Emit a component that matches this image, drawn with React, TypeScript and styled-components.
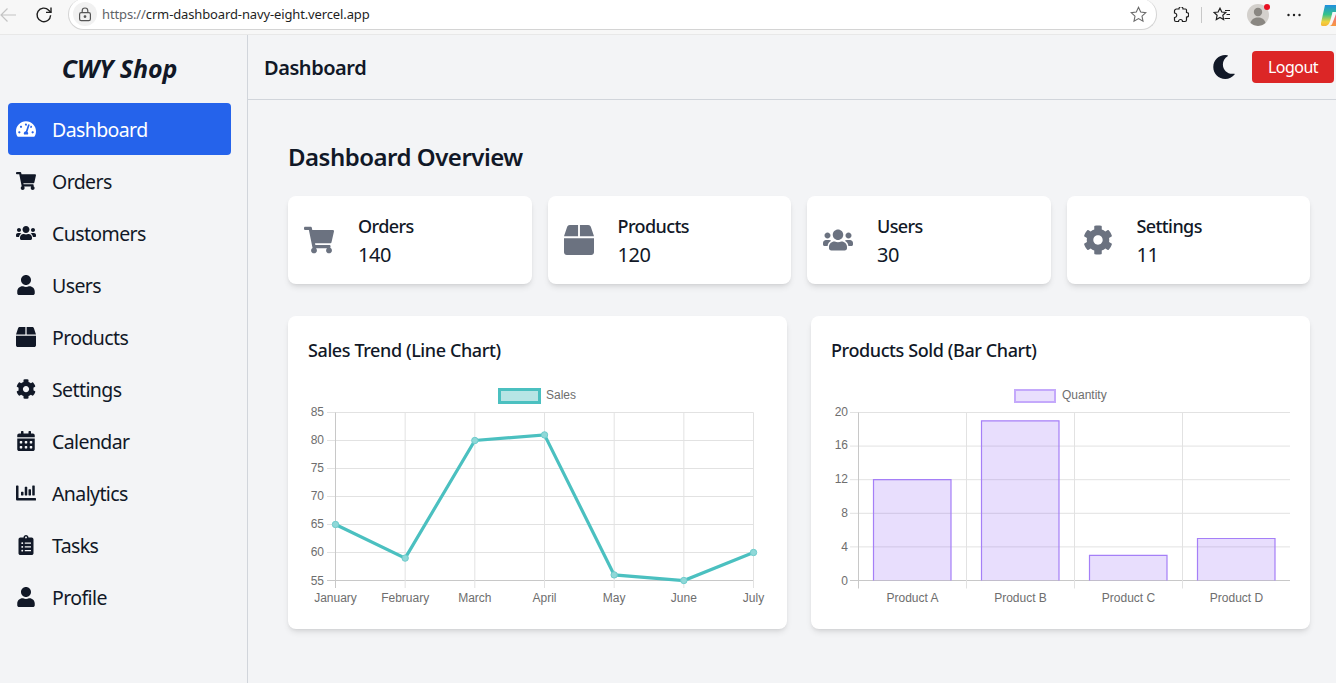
import styled, { createGlobalStyle } from "styled-components";
import {
  FaBox,
  FaCalendarAlt,
  FaChartBar,
  FaClipboardList,
  FaCog,
  FaMoon,
  FaShoppingCart,
  FaTachometerAlt,
  FaUser,
  FaUsers,
} from "react-icons/fa";

const GlobalStyle = createGlobalStyle`
  html, body {
    margin: 0;
    padding: 0;
    height: 100%;
    overflow: hidden;
    background: #f3f4f6;
  }
  * {
    box-sizing: border-box;
  }
`;

const Page = styled.div`
  width: 1336px;
  height: 683px;
  display: flex;
  flex-direction: column;
  overflow: hidden;
  font-family: "Noto Sans", "Open Sans", sans-serif;
  color: #111827;
  background: #f3f4f6;
`;

const BrowserBar = styled.div`
  height: 35px;
  flex: none;
  display: flex;
  align-items: flex-start;
  background: #f7f7f7;
  border-bottom: 1px solid #e8e8e8;
  overflow: hidden;
`;

const NavButton = styled.div<{ $width: number }>`
  width: ${(p) => p.$width}px;
  height: 30px;
  flex: none;
  display: flex;
  align-items: center;
  justify-content: center;
`;

const AddressBar = styled.div`
  width: 1089px;
  height: 31px;
  margin-top: -1px;
  flex: none;
  display: flex;
  align-items: center;
  padding: 0 9px 0 4px;
  background: #fff;
  border: 1px solid #d4d4d4;
  border-top: none;
  border-radius: 16px;
`;

const LockWrap = styled.div`
  width: 24px;
  height: 24px;
  flex: none;
  border-radius: 50%;
  background: #f1f1f1;
  display: flex;
  align-items: center;
  justify-content: center;
  margin-right: 5px;
`;

const Url = styled.div`
  flex: 1;
  font-size: 13px;
  letter-spacing: -0.13px;
  color: #1f1f1f;
  span {
    color: #5f6368;
  }
`;

const ToolIcon = styled.div<{ $width: number }>`
  width: ${(p) => p.$width}px;
  height: 30px;
  flex: none;
  display: flex;
  align-items: center;
  justify-content: center;
`;

const Divider = styled.div`
  width: 1px;
  height: 16px;
  margin: 7px 0 0 -4px;
  flex: none;
  background: #c8c8c8;
`;

const CopilotSlot = styled.div`
  margin: 5px 0 0 9px;
  flex: none;
  display: flex;
`;

const Shell = styled.div`
  flex: 1;
  min-height: 0;
  display: flex;
`;

const Sidebar = styled.aside`
  width: 248px;
  flex: none;
  padding: 0 16px 0 8px;
  border-right: 1px solid #d1d5db;
  background: #f3f4f6;
`;

const Brand = styled.div`
  height: 68px;
  padding-bottom: 2px;
  display: flex;
  align-items: center;
  justify-content: center;
  font-size: 25px;
  font-weight: 700;
  font-style: italic;
  letter-spacing: -0.05px;
`;

const NavList = styled.nav`
  display: flex;
  flex-direction: column;
`;

const NavItem = styled.div<{ $active?: boolean }>`
  height: 52px;
  display: flex;
  align-items: center;
  gap: 16px;
  padding: 0 8px;
  font-size: 19.5px;
  letter-spacing: -0.6px;
  border-radius: 4px;
  color: ${(p) => (p.$active ? "#fff" : "#111827")};
  background: ${(p) => (p.$active ? "#2563eb" : "transparent")};
  svg {
    width: 20px;
    height: 20px;
    flex: none;
  }
`;

const Main = styled.div`
  flex: 1;
  min-width: 0;
  display: flex;
  flex-direction: column;
`;

const Header = styled.header`
  height: 65px;
  flex: none;
  display: flex;
  align-items: center;
  padding: 0 2px 0 16px;
  border-bottom: 1px solid #d1d5db;
`;

const HeaderTitle = styled.h1`
  flex: 1;
  margin: 0;
  font-size: 20px;
  font-weight: 600;
  letter-spacing: -0.45px;
`;

const MoonButton = styled.div`
  display: flex;
  margin-right: 16px;
  color: #111827;
  svg {
    width: 24px;
    height: 24px;
  }
`;

const LogoutButton = styled.button`
  width: 82px;
  height: 32px;
  border: none;
  border-radius: 4px;
  background: #dc2626;
  color: #fff;
  font-family: inherit;
  font-size: 16px;
  letter-spacing: -0.5px;
`;

const Content = styled.main`
  flex: 1;
  padding: 39px 26px 0 40px;
`;

const PageTitle = styled.h2`
  margin: 0 0 21px;
  font-size: 24px;
  line-height: 36px;
  font-weight: 600;
  letter-spacing: -0.5px;
`;

const StatGrid = styled.div`
  display: grid;
  grid-template-columns: repeat(4, 1fr);
  gap: 16px;
  margin-bottom: 32px;
`;

const StatCard = styled.div`
  height: 88px;
  display: flex;
  align-items: center;
  gap: 24px;
  padding: 0 16px;
  background: #fff;
  border-radius: 8px;
  box-shadow: 0 4px 6px -1px rgba(0, 0, 0, 0.1), 0 2px 4px -2px rgba(0, 0, 0, 0.1);
  svg {
    width: 30px;
    height: 30px;
    flex: none;
    color: #6b7280;
  }
`;

const StatLabel = styled.div`
  font-size: 18px;
  line-height: 28px;
  font-weight: 500;
  letter-spacing: -0.6px;
`;

const StatValue = styled.div`
  margin-top: 1px;
  font-size: 20px;
  line-height: 28px;
  letter-spacing: -0.5px;
`;

const ChartGrid = styled.div`
  display: grid;
  grid-template-columns: repeat(2, 1fr);
  gap: 24px;
`;

const ChartCard = styled.section`
  height: 313px;
  padding: 20px;
  background: #fff;
  border-radius: 8px;
  box-shadow: 0 4px 6px -1px rgba(0, 0, 0, 0.1), 0 2px 4px -2px rgba(0, 0, 0, 0.1);
`;

const ChartTitle = styled.h3`
  margin: 0 0 16px;
  font-size: 18px;
  line-height: 28px;
  font-weight: 500;
  letter-spacing: -0.4px;
`;

const ChartSvg = styled.svg`
  display: block;
  width: 459px;
  height: 229px;
  text {
    font-family: "Liberation Sans", Arial, sans-serif;
    font-size: 12px;
    fill: #6e6e6e;
  }
`;

const navItems = [
  { label: "Dashboard", icon: FaTachometerAlt, active: true },
  { label: "Orders", icon: FaShoppingCart },
  { label: "Customers", icon: FaUsers },
  { label: "Users", icon: FaUser },
  { label: "Products", icon: FaBox },
  { label: "Settings", icon: FaCog },
  { label: "Calendar", icon: FaCalendarAlt },
  { label: "Analytics", icon: FaChartBar },
  { label: "Tasks", icon: FaClipboardList },
  { label: "Profile", icon: FaUser },
];

const stats = [
  { label: "Orders", value: 140, icon: FaShoppingCart },
  { label: "Products", value: 120, icon: FaBox },
  { label: "Users", value: 30, icon: FaUsers },
  { label: "Settings", value: 11, icon: FaCog },
];

const GRID = "#e2e2e2";
const AXIS = "#c8c8c8";

const lineLabels = ["January", "February", "March", "April", "May", "June", "July"];
const lineValues = [65, 59, 80, 81, 56, 55, 60];
const lineTicks = [85, 80, 75, 70, 65, 60, 55];
const lineX = (i: number) => 27.5 + i * 69.67;
const lineY = (v: number) => 32.5 + (85 - v) * 5.6;

const LineChart = () => {
  const points = lineValues.map((v, i) => `${lineX(i)},${lineY(v)}`).join(" ");
  return (
    <ChartSvg viewBox="0 0 459 229">
      <rect x="191.5" y="9.5" width="40" height="13" fill="#b7e5e5" stroke="#4bc0c0" strokeWidth="3" />
      <text x="238" y="19">Sales</text>
      {lineTicks.map((t) => (
        <g key={t}>
          <line x1="19" x2="445.5" y1={lineY(t)} y2={lineY(t)} stroke={t === 55 ? AXIS : GRID} />
          <text x="16" y={lineY(t) + 3 + (85 - t) / 30} textAnchor="end">{t}</text>
        </g>
      ))}
      {lineLabels.map((l, i) => (
        <g key={l}>
          <line x1={lineX(i)} x2={lineX(i)} y1="32.5" y2="208" stroke={i === 0 ? AXIS : GRID} />
          <text x={lineX(i)} y="222" textAnchor="middle">{l}</text>
        </g>
      ))}
      <polyline points={points} fill="none" stroke="#4bc0c0" strokeWidth="3.2" />
      {lineValues.map((v, i) => (
        <circle key={i} cx={lineX(i)} cy={lineY(v)} r="3.2" fill="#8fd8d8" stroke="#6fcccc" />
      ))}
    </ChartSvg>
  );
};

const barLabels = ["Product A", "Product B", "Product C", "Product D"];
const barValues = [12, 19, 3, 5];
const barTicks = [20, 16, 12, 8, 4, 0];
const barBase = 200.5;
const barY = (v: number) => barBase - v * 8.4;

const BarChart = () => (
  <ChartSvg viewBox="0 0 459 229">
    <rect x="184" y="10" width="40" height="12" fill="#e9dffd" stroke="#c4a9fb" strokeWidth="2" />
    <text x="231" y="19">Quantity</text>
    {barTicks.map((t) => (
      <g key={t}>
        <line x1="19" x2="459" y1={barY(t)} y2={barY(t)} stroke={t === 0 ? AXIS : GRID} />
        <text x="17" y={barY(t) + 3 + (20 - t) / 20} textAnchor="end">{t}</text>
      </g>
    ))}
    {[27.5, 135.5, 243.5, 351.5].map((x) => (
      <line key={x} x1={x} x2={x} y1="32.5" y2="208.5" stroke={x === 27.5 ? AXIS : GRID} />
    ))}
    {barValues.map((v, i) => {
      const x = 42.5 + i * 108;
      return (
        <g key={i}>
          <rect x={x} y={barY(v)} width="77.5" height={v * 8.4} fill="#8b5cf6" fillOpacity="0.2" />
          <path
            d={`M${x} ${barBase}V${barY(v)}H${x + 77.5}V${barBase}`}
            fill="none"
            stroke="#a57ff7"
            strokeWidth="1.2"
          />
        </g>
      );
    })}
    {barLabels.map((l, i) => (
      <text key={l} x={81.5 + i * 108} y="222" textAnchor="middle">{l}</text>
    ))}
  </ChartSvg>
);

const BrowserChrome = () => (
  <BrowserBar>
    <NavButton $width={20}>
      <svg width="20" height="16" viewBox="1 0 20 16" fill="none" stroke="#c4c4c4" strokeWidth="1.2">
        <path d="M17 8H2M8.5 1.5 2 8l6.5 6.5" />
      </svg>
    </NavButton>
    <NavButton $width={48}>
      <svg width="20" height="20" viewBox="0 0 20 20" fill="none" stroke="#1f1f1f" strokeWidth="1.4">
        <path d="M16.6 10.2a6.8 6.8 0 1 1-1.9-5L17 7.4" />
        <path d="M17 2.4v5h-5" />
      </svg>
    </NavButton>
    <AddressBar>
      <LockWrap>
        <svg width="14" height="15" viewBox="0 0 14 15" fill="none" stroke="#555" strokeWidth="1.2">
          <rect x="1.6" y="5.6" width="10.8" height="8" rx="1.6" />
          <path d="M4.2 5.6V3.8a2.8 2.8 0 0 1 5.6 0v1.8" />
          <circle cx="7" cy="9.6" r="0.8" fill="#555" />
        </svg>
      </LockWrap>
      <Url>
        <span>https://</span>crm-dashboard-navy-eight.vercel.app
      </Url>
      <svg width="17" height="17" viewBox="0 0 17 17" fill="none" stroke="#6a6a6a" strokeWidth="1.1">
        <path d="M8.5 1.3 10.7 6l5.1.6-3.8 3.5 1 5.1-4.5-2.6L4 15.2l1-5.1L1.200 6.600 6.300 6z" />
      </svg>
    </AddressBar>
    <ToolIcon $width={48}>
      <svg width="16" height="16" viewBox="0 0 16 16" fill="none" stroke="#1f1f1f" strokeWidth="1.2">
        <path d="M6 1.500a2 2 0 0 1 4 .5h2.500a1 1 0 0 1 1 1V5.500a2 2 0 1 1 0 4.500v3a1.500 1.500 0 0 1-1.500 1.500H9.500a2 2 0 1 0-4 0H3A1.500 1.500 0 0 1 1.500 13V10.500a2 2 0 1 0 0-4.500V4A2 2 0 0 1 3.500 2H6z" />
      </svg>
    </ToolIcon>
    <Divider />
    <ToolIcon $width={40}>
      <svg width="18" height="16" viewBox="0 0 18 16" fill="none" stroke="#1f1f1f" strokeWidth="1.2">
        <path d="M7 1.200 8.800 5l4 .5-3 2.800.8 4.200L7 10.400 3.300 12.500l.8-4.200-3-2.800 4-.5z" />
        <path d="M12 3.500h5M13.500 7.500H17M11.500 11.500H17" />
      </svg>
    </ToolIcon>
    <ToolIcon $width={34}>
      <svg width="24" height="24" viewBox="0 0 24 24">
        <circle cx="11" cy="12" r="11" fill="#d3d0cc" />
        <circle cx="11" cy="9" r="4.200" fill="#8a8782" />
        <path d="M3.500 20c1-4 4-5.500 7.500-5.500s6.500 1.500 7.500 5.500a11 11 0 0 1-15 0z" fill="#8a8782" />
        <circle cx="20" cy="4" r="3" fill="#e81123" />
      </svg>
    </ToolIcon>
    <ToolIcon $width={36}>
      <svg width="16" height="4" viewBox="0 0 16 4" fill="#1f1f1f">
        <circle cx="2.500" cy="2" r="1.200" />
        <circle cx="8" cy="2" r="1.200" />
        <circle cx="13.500" cy="2" r="1.200" />
      </svg>
    </ToolIcon>
    <CopilotSlot>
      <svg width="15" height="21" viewBox="0 0 15 21">
        <defs>
          <linearGradient id="copLeft" x1="0" y1="0" x2="0" y2="1">
            <stop offset="0" stopColor="#1f8fe0" />
            <stop offset="0.45" stopColor="#35c28a" />
            <stop offset="0.8" stopColor="#f2d23c" />
            <stop offset="1" stopColor="#f5b63a" />
          </linearGradient>
          <linearGradient id="copRight" x1="0" y1="0" x2="0" y2="1">
            <stop offset="0" stopColor="#f0648c" />
            <stop offset="1" stopColor="#f79a3e" />
          </linearGradient>
        </defs>
        <path d="M4 0H15V7H11.500L10 13C8.500 19 7 21 4 21H1.500C0 21-.5 19.500 0 18z" fill="url(#copLeft)" />
        <path d="M15 9 11.500 18C10.800 20 10 21 8 21H15z" fill="url(#copRight)" />
      </svg>
    </CopilotSlot>
  </BrowserBar>
);

const App = () => (
  <Page>
    <GlobalStyle />
    <BrowserChrome />
    <Shell>
      <Sidebar>
        <Brand>CWY Shop</Brand>
        <NavList>
          {navItems.map(({ label, icon: Icon, active }) => (
            <NavItem key={label} $active={active}>
              <Icon />
              {label}
            </NavItem>
          ))}
        </NavList>
      </Sidebar>
      <Main>
        <Header>
          <HeaderTitle>Dashboard</HeaderTitle>
          <MoonButton>
            <FaMoon />
          </MoonButton>
          <LogoutButton>Logout</LogoutButton>
        </Header>
        <Content>
          <PageTitle>Dashboard Overview</PageTitle>
          <StatGrid>
            {stats.map(({ label, value, icon: Icon }) => (
              <StatCard key={label}>
                <Icon />
                <div>
                  <StatLabel>{label}</StatLabel>
                  <StatValue>{value}</StatValue>
                </div>
              </StatCard>
            ))}
          </StatGrid>
          <ChartGrid>
            <ChartCard>
              <ChartTitle>Sales Trend (Line Chart)</ChartTitle>
              <LineChart />
            </ChartCard>
            <ChartCard>
              <ChartTitle>Products Sold (Bar Chart)</ChartTitle>
              <BarChart />
            </ChartCard>
          </ChartGrid>
        </Content>
      </Main>
    </Shell>
  </Page>
);

export default App;
